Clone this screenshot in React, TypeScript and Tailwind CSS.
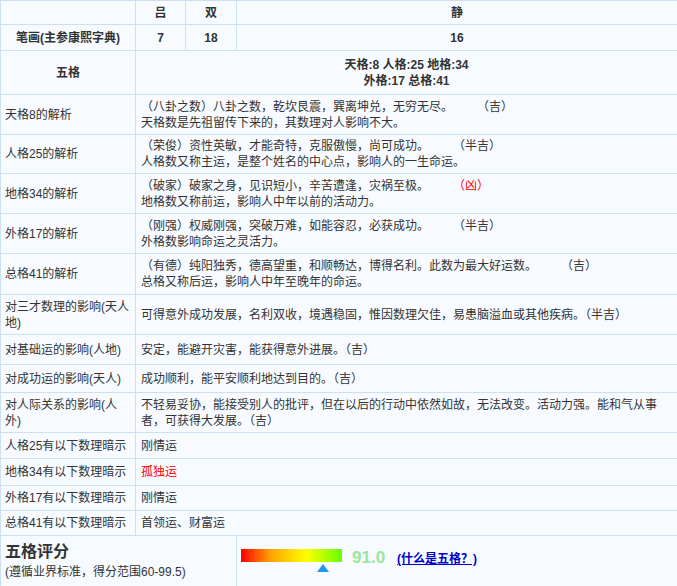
const rows: [string, React.ReactNode, number][] = [
  ['天格8的解析', <>（八卦之数）八卦之数，乾坎艮震，巽离坤兑，无穷无尽。　　　（吉）<br />天格数是先祖留传下来的，其数理对人影响不大。</>, 40],
  ['人格25的解析', <>（荣俊）资性英敏，才能奇特，克服傲慢，尚可成功。　　　（半吉）<br />人格数又称主运，是整个姓名的中心点，影响人的一生命运。</>, 39],
  ['地格34的解析', <>（破家）破家之身，见识短小，辛苦遭逢，灾祸至极。　　　<span className="text-[#ff0000]">（凶）</span><br />地格数又称前运，影响人中年以前的活动力。</>, 40],
  ['外格17的解析', <>（刚强）权威刚强，突破万难，如能容忍，必获成功。　　　（半吉）<br />外格数影响命运之灵活力。</>, 40],
  ['总格41的解析', <>（有德）纯阳独秀，德高望重，和顺畅达，博得名利。此数为最大好运数。　　　（吉）<br />总格又称后运，影响人中年至晚年的命运。</>, 41],
  ['对三才数理的影响(天人地)', <>可得意外成功发展，名利双收，境遇稳固，惟因数理欠佳，易患脑溢血或其他疾病。（半吉）</>, 40],
  ['对基础运的影响(人地)', <>安定，能避开灾害，能获得意外进展。（吉）</>, 30],
  ['对成功运的影响(天人)', <>成功顺利，能平安顺利地达到目的。（吉）</>, 28],
  ['对人际关系的影响(人外)', <>不轻易妥协，能接受别人的批评，但在以后的行动中依然如故，无法改变。活动力强。能和气从事者，可获得大发展。（吉）</>, 40],
  ['人格25有以下数理暗示', <>刚情运</>, 26],
  ['地格34有以下数理暗示', <span className="text-[#ff0000]">孤独运</span>, 27],
  ['外格17有以下数理暗示', <>刚情运</>, 25],
  ['总格41有以下数理暗示', <>首领运、财富运</>, 25],
];

export default function App() {
  const b = 'border border-[#cde0f2]';
  return (
    <div className="w-[677px] h-[586px] bg-white text-[#333] text-[12px] leading-[16px]" style={{ fontFamily: '"Liberation Sans","Noto Sans CJK SC",sans-serif' }}>
      <table className="w-[678px] border-collapse bg-[#f7fbff] table-fixed">
        <colgroup>
          <col className="w-[135px]" />
          <col className="w-[50px]" />
          <col className="w-[51px]" />
          <col />
        </colgroup>
        <tbody>
          <tr className="h-[24px] font-bold text-center">
            <td className={b}></td><td className={b}>吕</td><td className={b}>双</td><td className={b}>静</td>
          </tr>
          <tr className="h-[26px] font-bold text-center">
            <td className={b}>笔画(主参康熙字典)</td><td className={b}>7</td><td className={b}>18</td><td className={b}>16</td>
          </tr>
          <tr className="h-[44px] font-bold text-center">
            <td className={b}>五格</td>
            <td className={b} colSpan={3}>天格:8 人格:25 地格:34<br />外格:17 总格:41</td>
          </tr>
          {rows.map(([k, v, h]) => (
            <tr key={k} style={{ height: h }}>
              <td className={`${b} px-[4px]`}>{k}</td>
              <td className={`${b} px-[5px]`} colSpan={3}>{v}</td>
            </tr>
          ))}
          <tr className="h-[51px]">
            <td className={`${b} px-[4px]`} colSpan={3}>
              <div className="text-[16px] leading-[20px] font-bold">五格评分</div>
              <div className="mt-[2px]">(遵循业界标准，得分范围60-99.5)</div>
            </td>
            <td className={`${b} px-[4px]`}>
              <div className="flex items-start gap-[10px]">
                <div className="relative w-[101px] h-[24px]">
                  <div className="h-[13px] w-[101px] bg-[linear-gradient(to_right,#ff0000,#ffa500_30%,#ffff00_65%,#66ff00)]" />
                  <div className="absolute left-[76px] top-[15px] w-0 h-0 border-l-[6px] border-r-[6px] border-b-[8px] border-l-transparent border-r-transparent border-b-[#2196f3]" />
                </div>
                <span className="text-[17px] leading-[17px] font-bold text-[#9be59b]">91.0</span>
                <a className="text-[#0000cc] underline font-bold mt-[2px] ml-[2px]">(什么是五格？)</a>
              </div>
            </td>
          </tr>
        </tbody>
      </table>
    </div>
  );
}
